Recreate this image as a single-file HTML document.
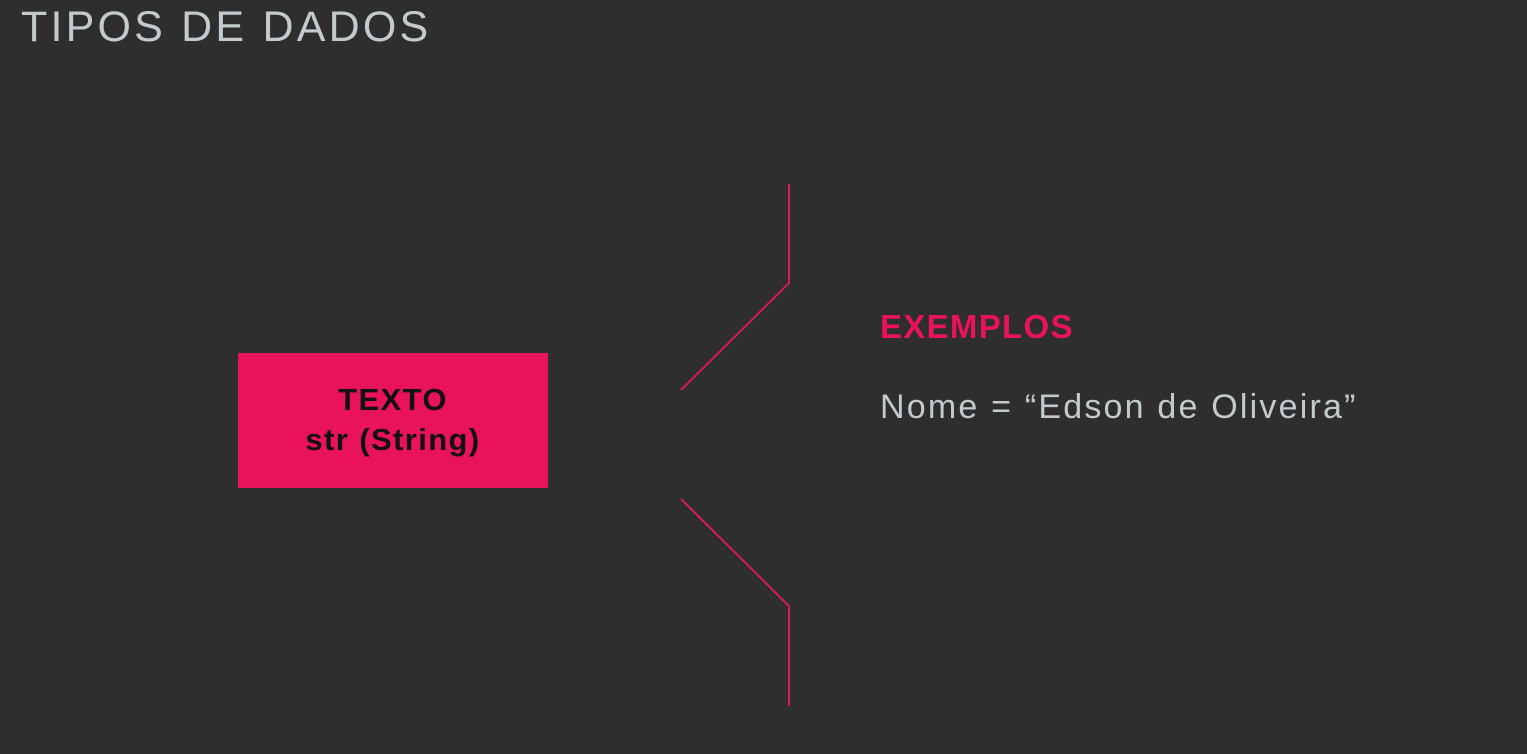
<!DOCTYPE html>
<html><head><style>
body{margin:0;width:1527px;height:754px;background:#2e2e2e;position:relative;overflow:hidden;font-family:"Liberation Sans",sans-serif}
.t{position:absolute;left:21px;top:3px;font-size:43px;color:#c3cacd;letter-spacing:3.2px;font-weight:300;white-space:nowrap}
.box{position:absolute;left:238px;top:353px;width:310px;height:135px;background:#e8135a;color:#111;font-weight:bold;font-size:31px;text-align:center;line-height:40px;box-sizing:border-box;padding-top:27px;letter-spacing:1.4px}
.ex{position:absolute;left:880px;top:308px;font-size:33px;font-weight:bold;color:#e8135a;letter-spacing:1.3px}
.nm{position:absolute;left:880px;top:388px;font-size:34px;color:#c3cacd;letter-spacing:2.2px;white-space:nowrap}
svg{position:absolute;left:0;top:0}
</style></head><body>
<div class="t">TIPOS DE DADOS</div>
<svg width="1527" height="754"><g stroke="#d81a55" stroke-width="2" fill="none"><polyline points="789,184 789,283 681,390"/><polyline points="681,499 789,606 789,706"/></g></svg>
<div class="box">TEXTO<br>str (String)</div>
<div class="ex">EXEMPLOS</div>
<div class="nm">Nome = “Edson de Oliveira”</div>
</body></html>
